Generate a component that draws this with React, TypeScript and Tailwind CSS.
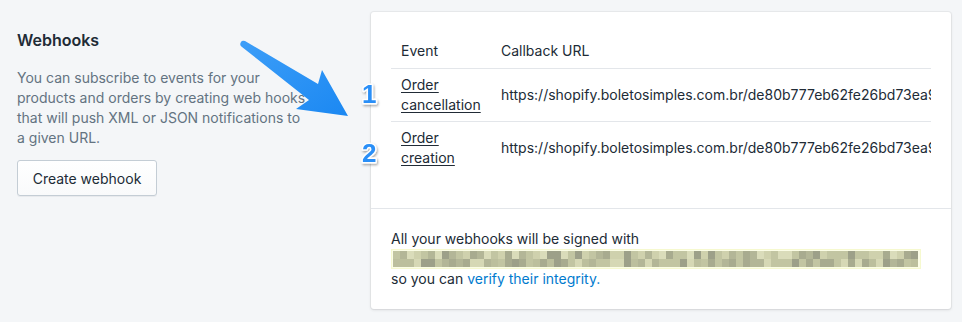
import React from "react";

const font = { fontFamily: 'Inter, "Noto Sans", "Liberation Sans", sans-serif' };

// pixelated signing key (blurred out in the screenshot)
const palette = ["#dadcba", "#cfd1ad", "#c2c5a2", "#b3b697", "#a8ab8f", "#9da089", "#d6d8b5", "#bcbf9d"];
const mosaic = (() => {
  let seed = 7;
  const rnd = () => {
    seed = (seed * 9301 + 49297) % 233280;
    return seed / 233280;
  };
  const rows: string[][] = [];
  for (let r = 0; r < 2; r++) {
    const row: string[] = [];
    for (let c = 0; c < 75; c++) {
      const base = r === 0 ? 0 : 2;
      row.push(palette[Math.min(palette.length - 1, Math.floor(rnd() * 6) + base) % palette.length]);
    }
    rows.push(row);
  }
  return rows;
})();

const events = [
  { name: ["Order", "cancellation"] },
  { name: ["Order", "creation"] },
];

const url = "https://shopify.boletosimples.com.br/de80b777eb62fe26bd73ea9f1c2a4b7e";

export default function App() {
  return (
    <div className="relative w-[962px] h-[322px] bg-[#f4f6f8] text-[#212b36] overflow-hidden" style={font}>
      <div className="flex pt-3 pl-[17px]">
        {/* Left description */}
        <div className="w-[330px] pt-[16px]">
          <h2 className="text-[16px] leading-6 font-semibold">Webhooks</h2>
          <p className="mt-[16px] text-[14px] leading-5 text-[#637381] w-[292px]">
            You can subscribe to events for your products and orders by creating web hooks that will push XML or JSON notifications to a given URL.
          </p>
          <button className="mt-[12px] h-9 w-[140px] rounded-[3px] border border-[#c4cdd5] bg-gradient-to-b from-white to-[#f9fafb] shadow-[0_1px_0_0_rgba(22,29,37,0.05)] text-[14px]">
            Create webhook
          </button>
        </div>

        {/* Card */}
        <div className="ml-[24px] w-[580px] h-[297px] rounded-[3px] bg-white shadow-[0_0_0_1px_rgba(63,63,68,0.05),0_1px_3px_0_rgba(63,63,68,0.15)] flex flex-col">
          <div className="h-[198px] px-5 pt-5 border-b border-[#e3e6ea]">
            <div className="overflow-hidden w-[540px]">
              <div className="flex h-[37px] items-center border-b border-[#e3e6ea] text-[14px]">
                <div className="w-[100px] px-[10px]">Event</div>
                <div className="px-[10px]">Callback URL</div>
              </div>
              {events.map((ev, i) => (
                <div key={i} className={`flex py-[6px] text-[14px] leading-5 ${i === 0 ? "border-b border-[#e3e6ea]" : ""}`}>
                  <div className="w-[100px] shrink-0 px-[10px]">
                    <a className="underline underline-offset-2 decoration-[#212b36]">{ev.name[0]}</a>
                    <br />
                    <a className="underline underline-offset-2 decoration-[#212b36]">{ev.name[1]}</a>
                  </div>
                  <div className="px-[10px] flex items-center whitespace-nowrap">{url}</div>
                </div>
              ))}
            </div>
          </div>
          <div className="px-5 py-5 text-[14px] leading-5">
            <div>All your webhooks will be signed with</div>
            <div className="h-5 w-[530px] flex flex-col justify-center border border-[#f6f9cf] bg-[#fbfde6] px-[1px]">
              {mosaic.map((row, r) => (
                <div key={r} className="flex h-[8px]">
                  {row.map((c, k) => (
                    <div key={k} className="h-full w-[7px]" style={{ backgroundColor: c }} />
                  ))}
                </div>
              ))}
            </div>
            <div>
              so you can <a className="text-[#007ace]">verify their integrity.</a>
            </div>
          </div>
        </div>
      </div>

      {/* Annotation arrow and step numbers */}
      <svg className="absolute left-0 top-0 pointer-events-none" width="962" height="322">
        <defs>
          <linearGradient id="arr" x1="0" y1="0" x2="1" y2="1">
            <stop offset="0" stopColor="#3d9ef8" />
            <stop offset="1" stopColor="#1b88f2" />
          </linearGradient>
          <filter id="sh" x="-50%" y="-50%" width="200%" height="200%">
            <feDropShadow dx="1" dy="1.5" stdDeviation="1" floodColor="#000" floodOpacity="0.35" />
          </filter>
        </defs>
        <path
          d="M241 42 Q242 40 245 41 L318 84 L322 70 L348 116 L296 109 L309 100 L242 47 Q239 45 241 42 Z"
          fill="url(#arr)"
        />
        <g
          filter="url(#sh)"
          fontFamily='"Liberation Sans", Arial, sans-serif'
          fontWeight="bold"
          fontSize="26"
          fill="#2a8ff7"
          stroke="#fff"
          strokeWidth="3"
          strokeLinejoin="round"
          style={{ paintOrder: "stroke" }}
        >
          <text x="362" y="103">1</text>
          <text x="362" y="162">2</text>
        </g>
      </svg>
    </div>
  );
}
